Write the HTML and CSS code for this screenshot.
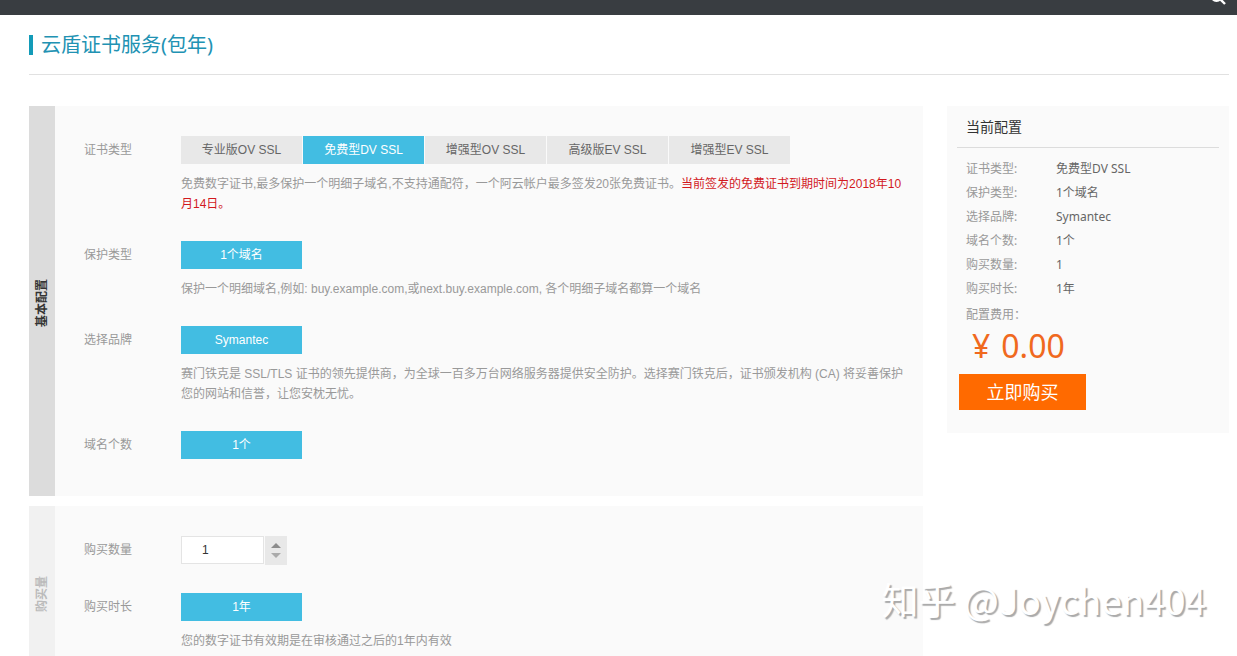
FILE: index.html
```html
<!DOCTYPE html>
<html lang="zh-CN">
<head>
<meta charset="utf-8">
<title>云盾证书服务(包年)</title>
<link rel="stylesheet" href="styles.css">
</head>
<body>
<header class="topbar">
  <button class="search" type="button" aria-label="搜索">
    <svg width="16" height="16" viewBox="0 0 16 16" fill="none" stroke="#fff" stroke-width="2.4"><circle cx="6.5" cy="6.5" r="5.2"/><path d="M10.4 10.4L15 15"/></svg>
  </button>
</header>
<div class="page">
  <div class="page-head"><h1 class="page-title">云盾证书服务(包年)</h1></div>
  <div class="layout">
    <main class="main">
      <section class="panel panel-basic">
        <h2 class="rail"><span class="rail-text">基本配置</span></h2>
        <div class="rows">
          <div class="row">
            <span class="label" id="l-type">证书类型</span>
            <div class="field">
              <div class="options" role="group" aria-labelledby="l-type">
                <button class="option" type="button">专业版OV SSL</button>
                <button class="option is-active" type="button" aria-pressed="true">免费型DV SSL</button>
                <button class="option" type="button">增强型OV SSL</button>
                <button class="option" type="button">高级版EV SSL</button>
                <button class="option" type="button">增强型EV SSL</button>
              </div>
              <p class="hint">免费数字证书,最多保护一个明细子域名,不支持通配符，一个阿云帐户最多签发20张免费证书。<em class="warn">当前签发的免费证书到期时间为2018年10月14日。</em></p>
            </div>
          </div>
          <div class="row">
            <span class="label" id="l-protect">保护类型</span>
            <div class="field">
              <div class="options" role="group" aria-labelledby="l-protect"><button class="option is-active" type="button" aria-pressed="true">1个域名</button></div>
              <p class="hint">保护一个明细域名,例如: buy.example.com,或next.buy.example.com, 各个明细子域名都算一个域名</p>
            </div>
          </div>
          <div class="row">
            <span class="label" id="l-brand">选择品牌</span>
            <div class="field">
              <div class="options" role="group" aria-labelledby="l-brand"><button class="option is-active" type="button" aria-pressed="true">Symantec</button></div>
              <p class="hint">赛门铁克是 SSL/TLS 证书的领先提供商，为全球一百多万台网络服务器提供安全防护。选择赛门铁克后，证书颁发机构 (CA) 将妥善保护您的网站和信誉，让您安枕无忧。</p>
            </div>
          </div>
          <div class="row">
            <span class="label" id="l-count">域名个数</span>
            <div class="field">
              <div class="options" role="group" aria-labelledby="l-count"><button class="option is-active" type="button" aria-pressed="true">1个</button></div>
            </div>
          </div>
        </div>
      </section>
      <section class="panel panel-amount">
        <h2 class="rail"><span class="rail-text">购买量</span></h2>
        <div class="rows">
          <div class="row">
            <label class="label" for="qty">购买数量</label>
            <div class="field">
              <div class="stepper">
                <input class="qty" id="qty" type="text" value="1">
                <div class="steps">
                  <button class="step" type="button" aria-label="增加"><svg width="10" height="5" viewBox="0 0 10 5"><path d="M0 5L5 0L10 5Z" fill="#8c8c8c"/></svg></button>
                  <button class="step" type="button" aria-label="减少"><svg width="10" height="5" viewBox="0 0 10 5"><path d="M0 0L5 5L10 0Z" fill="#aaa"/></svg></button>
                </div>
              </div>
            </div>
          </div>
          <div class="row">
            <span class="label" id="l-time">购买时长</span>
            <div class="field">
              <div class="options" role="group" aria-labelledby="l-time"><button class="option is-active" type="button" aria-pressed="true">1年</button></div>
              <p class="hint">您的数字证书有效期是在审核通过之后的1年内有效</p>
            </div>
          </div>
        </div>
      </section>
    </main>
    <aside class="summary">
      <h2 class="summary-title">当前配置</h2>
      <dl class="specs">
        <dt>证书类型:</dt><dd>免费型DV SSL</dd>
        <dt>保护类型:</dt><dd>1个域名</dd>
        <dt>选择品牌:</dt><dd>Symantec</dd>
        <dt>域名个数:</dt><dd>1个</dd>
        <dt>购买数量:</dt><dd>1</dd>
        <dt>购买时长:</dt><dd>1年</dd>
      </dl>
      <p class="fee">配置费用：</p>
      <p class="price"><span>¥</span><span>0.00</span></p>
      <button class="buy" type="button">立即购买</button>
    </aside>
  </div>
</div>
<div class="watermark">知乎 @Joychen404</div>
</body>
</html>
```

FILE: styles.css
```css
* { box-sizing: border-box; }
body {
  margin: 0;
  height: 100vh;
  overflow: hidden;
  background: #fff;
  color: #999;
  font: 12px/20px "Liberation Sans", "Noto Sans CJK SC", sans-serif;
}
h1, h2, p, dl, dd { margin: 0; }
button, input { font: inherit; border: 0; padding: 0; border-radius: 0; }
svg { display: block; }

.topbar {
  display: flex;
  justify-content: flex-end;
  align-items: flex-end;
  height: 15px;
  padding: 0 11px 10px 0;
  overflow: hidden;
  background: #393d41;
}
.search { background: none; }

.page { padding: 0 8px 0 29px; }
.page-head {
  display: flex;
  align-items: center;
  height: 60px;
  border-bottom: 1px solid #e1e1e1;
}
.page-title {
  padding-left: 8px;
  border-left: 4px solid #139bb8;
  color: #2192b3;
  font: 400 20px/20px "Noto Sans", "Noto Sans CJK SC", sans-serif;
}
.layout {
  display: grid;
  grid-template-columns: minmax(0, 1fr) 282px;
  align-items: start;
  gap: 24px;
  padding-top: 31px;
}
.main { display: grid; gap: 10px; }

.panel { display: flex; background: #fafafa; }
.rail {
  display: flex;
  align-items: center;
  justify-content: center;
  flex: 0 0 26px;
  padding-top: 4px;
  font-size: 12px;
  font-weight: 700;
}
.rail-text {
  writing-mode: vertical-rl;
  text-orientation: sideways;
  transform: rotate(180deg);
}
.panel-basic .rail { background: #dcdcdc; color: #333; }
.panel-amount .rail { background: #f1f1f1; color: #bbb; }
.rows {
  flex: 1;
  min-width: 0;
  padding: 30px 18px 0 29px;
}
.panel-basic .rows { padding-bottom: 10px; }
.row { display: flex; padding-bottom: 27px; }
.label { flex: 0 0 97px; line-height: 28px; }
.field { flex: 1; min-width: 0; }
.options { display: flex; gap: 1px; }
.option {
  width: 121px;
  height: 28px;
  background: #e8e8e8;
  color: #666;
}
.option.is-active { background: #42bde2; color: #fff; }
.hint { padding-top: 10px; }
.warn { color: #d2191e; font-style: normal; }

.stepper { display: flex; align-items: flex-start; gap: 1px; padding-bottom: 1px; }
.qty {
  width: 83px;
  height: 28px;
  padding-left: 20px;
  border: 1px solid #e4e4e4;
  background: #fff;
  color: #333;
}
.steps {
  display: flex;
  flex-direction: column;
  justify-content: center;
  gap: 5px;
  width: 22px;
  height: 29px;
  background: #e8e8e8;
}
.step { display: flex; justify-content: center; background: none; }

.summary {
  padding: 0 10px 23px;
  background: #fafafa;
  font-family: "Noto Sans", "Noto Sans CJK SC", sans-serif;
}
.summary-title {
  padding-left: 9px;
  border-bottom: 1px solid #dcdcdc;
  color: #333;
  font-size: 14px;
  font-weight: 400;
  line-height: 41px;
}
.specs {
  display: grid;
  grid-template-columns: 90px 1fr;
  padding: 9px 0 0 9px;
  line-height: 24px;
}
.specs dd { color: #666; }
.fee { padding: 4px 0 0 9px; }
.price {
  display: flex;
  gap: 11px;
  padding: 0 0 7px 15px;
  color: #f0691e;
  font-size: 32px;
  line-height: 42px;
}
.buy {
  width: 127px;
  height: 36px;
  margin-left: 2px;
  background: #ff6a00;
  color: #fff;
  font-size: 18px;
}

.watermark {
  position: absolute;
  right: 31px;
  bottom: 33px;
  color: #fff;
  font: 37px/48px "Noto Sans CJK SC", sans-serif;
  text-shadow: 2px 2px 1px #aaa;
}
```
